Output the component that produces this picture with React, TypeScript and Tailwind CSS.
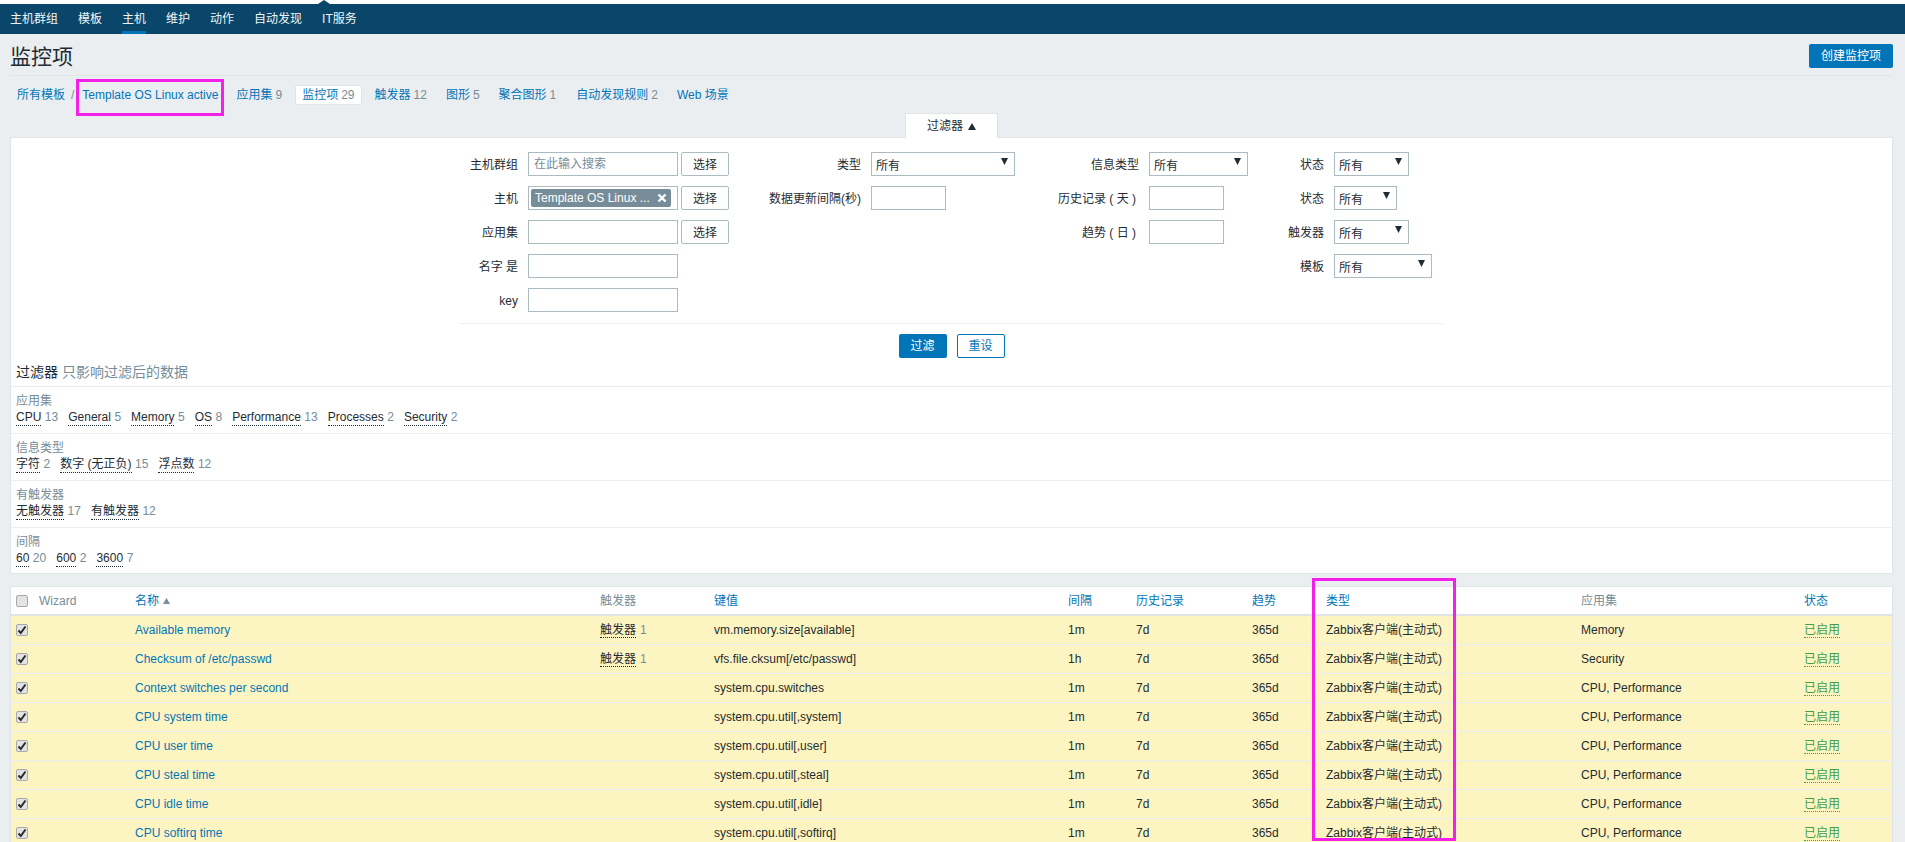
const fontStack = "font-['Liberation_Sans','Noto_Sans_CJK_SC',sans-serif]"

const navItems = ['主机群组', '模板', '主机', '维护', '动作', '自动发现', 'IT服务']

const subNav = [
  { text: '应用集', count: '9', className: 'ml-[18px]' },
  { text: '监控项', count: '29', active: true, className: 'ml-[13px]' },
  { text: '触发器', count: '12', className: 'ml-[13px]' },
  { text: '图形', count: '5', className: 'ml-[19px]' },
  { text: '聚合图形', count: '1', className: 'ml-[19px]' },
  { text: '自动发现规则', count: '2', className: 'ml-[20px]' },
  { text: 'Web 场景', count: '', className: 'ml-[19px]' },
]

const tagGroups = [
  { title: '应用集', items: [['CPU', '13'], ['General', '5'], ['Memory', '5'], ['OS', '8'], ['Performance', '13'], ['Processes', '2'], ['Security', '2']] },
  { title: '信息类型', items: [['字符', '2'], ['数字 (无正负)', '15'], ['浮点数', '12']] },
  { title: '有触发器', items: [['无触发器', '17'], ['有触发器', '12']] },
  { title: '间隔', items: [['60', '20'], ['600', '2'], ['3600', '7']] },
]

const rows = [
  { name: 'Available memory', trigger: true, key: 'vm.memory.size[available]', interval: '1m', apps: 'Memory' },
  { name: 'Checksum of /etc/passwd', trigger: true, key: 'vfs.file.cksum[/etc/passwd]', interval: '1h', apps: 'Security' },
  { name: 'Context switches per second', trigger: false, key: 'system.cpu.switches', interval: '1m', apps: 'CPU, Performance' },
  { name: 'CPU system time', trigger: false, key: 'system.cpu.util[,system]', interval: '1m', apps: 'CPU, Performance' },
  { name: 'CPU user time', trigger: false, key: 'system.cpu.util[,user]', interval: '1m', apps: 'CPU, Performance' },
  { name: 'CPU steal time', trigger: false, key: 'system.cpu.util[,steal]', interval: '1m', apps: 'CPU, Performance' },
  { name: 'CPU idle time', trigger: false, key: 'system.cpu.util[,idle]', interval: '1m', apps: 'CPU, Performance' },
  { name: 'CPU softirq time', trigger: false, key: 'system.cpu.util[,softirq]', interval: '1m', apps: 'CPU, Performance' },
]

function Arrow() {
  return (
    <svg width="7" height="7" viewBox="0 0 7 7" className="shrink-0 mb-[5px]">
      <polygon points="0,0 7,0 3.5,7" fill="#1f2c33" />
    </svg>
  )
}

function Select({ width }: { width: string }) {
  return (
    <div className={`${width} h-[24px] border border-[#acbbc2] bg-white flex items-center justify-between pl-[4px] pr-[6px]`}>
      <span className="pt-[3px]">所有</span>
      <Arrow />
    </div>
  )
}

function Input({ width, placeholder }: { width: string; placeholder?: string }) {
  return (
    <div className={`${width} h-[24px] border border-[#acbbc2] bg-white flex items-center px-[5px] text-[#768d99]`}>
      {placeholder}
    </div>
  )
}

function SelectButton() {
  return (
    <button className="w-[48px] h-[24px] ml-[3px] pt-[1px] border border-[#acbbc2] rounded-[2px] bg-white text-[#1f2c33]">
      选择
    </button>
  )
}

function FormRow({ label, labelWidth, children }: { label: string; labelWidth: string; children?: React.ReactNode }) {
  return (
    <div className="flex items-center h-[24px]">
      <div className={`${labelWidth} pt-[1px] text-right mr-[10px] whitespace-nowrap`}>{label}</div>
      {children}
    </div>
  )
}

function FilterForm() {
  return (
    <div className="mx-auto w-[983px] pt-[14px]">
      <div className="flex">
        <div className="w-[269px] flex flex-col gap-[10px]">
          <FormRow label="主机群组" labelWidth="w-[58px]">
            <Input width="w-[150px]" placeholder="在此输入搜索" />
            <SelectButton />
          </FormRow>
          <FormRow label="主机" labelWidth="w-[58px]">
            <div className="w-[150px] h-[24px] border border-[#acbbc2] bg-white p-[2px]">
              <div className="w-[140px] h-[18px] rounded-[2px] bg-[#768d99] text-white flex items-center justify-between pl-[4px] pr-[4px] whitespace-nowrap">
                <span>Template OS Linux ...</span>
                <svg width="10" height="10" viewBox="0 0 10 10">
                  <path d="M1.5 1.5 L8.5 8.5 M8.5 1.5 L1.5 8.5" stroke="#ffffff" strokeWidth="2.4" />
                </svg>
              </div>
            </div>
            <SelectButton />
          </FormRow>
          <FormRow label="应用集" labelWidth="w-[58px]">
            <Input width="w-[150px]" />
            <SelectButton />
          </FormRow>
          <FormRow label="名字 是" labelWidth="w-[58px]">
            <Input width="w-[150px]" />
          </FormRow>
          <FormRow label="key" labelWidth="w-[58px]">
            <Input width="w-[150px]" />
          </FormRow>
        </div>
        <div className="w-[286px] flex flex-col gap-[10px]">
          <FormRow label="类型" labelWidth="w-[132px]">
            <Select width="w-[144px]" />
          </FormRow>
          <FormRow label="数据更新间隔(秒)" labelWidth="w-[132px]">
            <Input width="w-[75px]" />
          </FormRow>
        </div>
        <div className="w-[233px] flex flex-col gap-[10px]">
          <FormRow label="信息类型" labelWidth="w-[124px]">
            <Select width="w-[99px]" />
          </FormRow>
          <FormRow label="历史记录 ( 天 )" labelWidth="w-[121px]">
            <Input width="ml-[3px] w-[75px]" />
          </FormRow>
          <FormRow label="趋势 ( 日 )" labelWidth="w-[121px]">
            <Input width="ml-[3px] w-[75px]" />
          </FormRow>
        </div>
        <div className="w-[195px] flex flex-col gap-[10px]">
          <FormRow label="状态" labelWidth="w-[76px]">
            <Select width="w-[75px]" />
          </FormRow>
          <FormRow label="状态" labelWidth="w-[76px]">
            <Select width="w-[63px]" />
          </FormRow>
          <FormRow label="触发器" labelWidth="w-[76px]">
            <Select width="w-[75px]" />
          </FormRow>
          <FormRow label="模板" labelWidth="w-[76px]">
            <Select width="w-[98px]" />
          </FormRow>
        </div>
      </div>
      <div className="mt-[11px] border-t border-[#ebeef0] pt-[10px] flex justify-center gap-[10px]">
        <button className="w-[48px] h-[24px] rounded-[2px] bg-[#0275b8] text-white">过滤</button>
        <button className="w-[48px] h-[24px] rounded-[2px] border border-[#0275b8] bg-white text-[#0275b8]">重设</button>
      </div>
    </div>
  )
}

function TagFilter() {
  return (
    <div>
      <div className="h-[28px] pl-[5px] flex items-center text-[14px] text-[#768d99]">
        <span className="text-[#1f2c33] mr-[4px]">过滤器</span>
        只影响过滤后的数据
      </div>
      {tagGroups.map((group) => (
        <div key={group.title} className="h-[47px] border-t border-[#ebeef0] pl-[5px] pt-[6px]">
          <div className="h-[16px] leading-[16px] text-[#768d99]">{group.title}</div>
          <div className="h-[16px] leading-[16px] flex gap-[10px]">
            {group.items.map(([text, count]) => (
              <div key={text} className="flex gap-[3.5px] whitespace-nowrap">
                <span className="h-[17px] border-b border-dotted border-[#1f2c33]">{text}</span>
                <span className="text-[#768d99]">{count}</span>
              </div>
            ))}
          </div>
        </div>
      ))}
    </div>
  )
}

function Checkbox({ checked }: { checked?: boolean }) {
  return (
    <span className="w-[12px] h-[12px] border border-[#a9a9a9] rounded-[2px] bg-[#e3e3e3] flex items-center justify-center">
      {checked && (
        <svg width="10" height="10" viewBox="0 0 10 10">
          <path d="M1.5 5.5 L3.8 8 L8.5 1.5" fill="none" stroke="#2b2b2b" strokeWidth="2" />
        </svg>
      )}
    </span>
  )
}

function ItemsTable() {
  return (
    <table className="w-full table-fixed border-collapse">
      <colgroup>
        <col className="w-[28px]" />
        <col className="w-[96px]" />
        <col className="w-[465px]" />
        <col className="w-[114px]" />
        <col className="w-[354px]" />
        <col className="w-[68px]" />
        <col className="w-[116px]" />
        <col className="w-[74px]" />
        <col className="w-[255px]" />
        <col className="w-[223px]" />
        <col />
      </colgroup>
      <thead>
        <tr className="h-[28px] bg-white border-b-2 border-[#dfe4e7] text-left font-normal">
          <th className="pl-[5px] font-normal"><Checkbox /></th>
          <th className="font-normal text-[#768d99]">Wizard</th>
          <th className="font-normal text-[#0275b8]">
            名称
            <svg width="7" height="6" viewBox="0 0 7 6" className="inline ml-[4px]">
              <polygon points="3.5,0 7,6 0,6" fill="#768d99" />
            </svg>
          </th>
          <th className="font-normal text-[#768d99]">触发器</th>
          <th className="font-normal text-[#0275b8]">键值</th>
          <th className="font-normal text-[#0275b8]">间隔</th>
          <th className="font-normal text-[#0275b8]">历史记录</th>
          <th className="font-normal text-[#0275b8]">趋势</th>
          <th className="font-normal text-[#0275b8]">类型</th>
          <th className="font-normal text-[#768d99]">应用集</th>
          <th className="font-normal text-[#0275b8]">状态</th>
        </tr>
      </thead>
      <tbody>
        {rows.map((row) => (
          <tr key={row.name} className="h-[29px] bg-[#fcf5c1] border-b border-[#ebeef0]">
            <td className="pl-[5px]"><Checkbox checked /></td>
            <td></td>
            <td className="text-[#0275b8]">{row.name}</td>
            <td>
              {row.trigger && (
                <>
                  <span className="border-b border-dotted border-[#1f2c33]">触发器</span>
                  <span className="text-[#768d99] ml-[4px]">1</span>
                </>
              )}
            </td>
            <td>{row.key}</td>
            <td>{row.interval}</td>
            <td>7d</td>
            <td>365d</td>
            <td>Zabbix客户端(主动式)</td>
            <td>{row.apps}</td>
            <td>
              <span className="text-[#429e47] border-b border-dotted border-[#429e47]">已启用</span>
            </td>
          </tr>
        ))}
      </tbody>
    </table>
  )
}

export default function App() {
  return (
    <div className={`relative h-[842px] overflow-hidden bg-[#ebeef0] pt-[4px] text-[12px] leading-[16px] text-[#1f2c33] ${fontStack}`}>
      <div className="absolute left-0 top-0 right-0 h-[4px] bg-white" />
      <svg width="12" height="4" viewBox="0 0 12 4" className="absolute left-[318px] top-0">
        <polygon points="6,0 12,4 0,4" fill="#0a466a" />
      </svg>
      <nav className="h-[30px] bg-[#0a466a] flex gap-[20px] pl-[10px]">
        {navItems.map((item) => (
          <a
            key={item}
            className={`h-[30px] leading-[30px] text-[#f2f5f6] ${item === '主机' ? 'border-b-[3px] border-[#0275b8]' : ''}`}
          >
            {item}
          </a>
        ))}
      </nav>

      <div className="pl-[10px] pr-[12px]">
        <div className="h-[42px] border-b border-[#dfe4e7] flex justify-between pt-[10px]">
          <h1 className="text-[21px] leading-[26px] font-normal">监控项</h1>
          <button className="w-[84px] h-[24px] rounded-[2px] bg-[#0275b8] text-white">创建监控项</button>
        </div>

        <div className="h-[37px] pt-[9px] pl-[7px] flex items-start">
          <a className="h-[20px] leading-[20px] text-[#0275b8]">所有模板</a>
          <span className="h-[20px] leading-[20px] ml-[6px] mr-[8px] text-[#768d99]">/</span>
          <a className="h-[20px] leading-[20px] text-[#0275b8]">Template OS Linux active</a>
          {subNav.map((item) => (
            <div
              key={item.text}
              className={`h-[20px] whitespace-nowrap ${item.className} ${item.active ? 'leading-[18px] bg-white border border-[#dfe4e7] rounded-[2px] px-[6px]' : 'leading-[20px]'}`}
            >
              <a className="text-[#0275b8]">{item.text}</a>
              {item.count && <span className="text-[#768d99] ml-[3px]">{item.count}</span>}
            </div>
          ))}
        </div>

        <div className="h-[24px] flex justify-center">
          <div className="w-[93px] h-[25px] relative z-10 bg-white border border-b-0 border-[#dfe4e7] flex items-center justify-center gap-[5px]">
            过滤器
            <svg width="8" height="7" viewBox="0 0 8 7">
              <polygon points="4,0 8,7 0,7" fill="#1f2c33" />
            </svg>
          </div>
        </div>

        <div className="h-[437px] bg-white border border-[#dfe4e7]">
          <FilterForm />
          <TagFilter />
        </div>

        <div className="mt-[12px] border-x border-t border-[#dfe4e7]">
          <ItemsTable />
        </div>
      </div>

      {/* annotation boxes from the original screenshot */}
      <div className="absolute left-[76px] top-[79px] w-[148px] h-[37px] border-[3px] border-[#f321e8]" />
      <div className="absolute left-[1312px] top-[578px] w-[144px] h-[263px] border-[3px] border-[#f321e8]" />
    </div>
  )
}
